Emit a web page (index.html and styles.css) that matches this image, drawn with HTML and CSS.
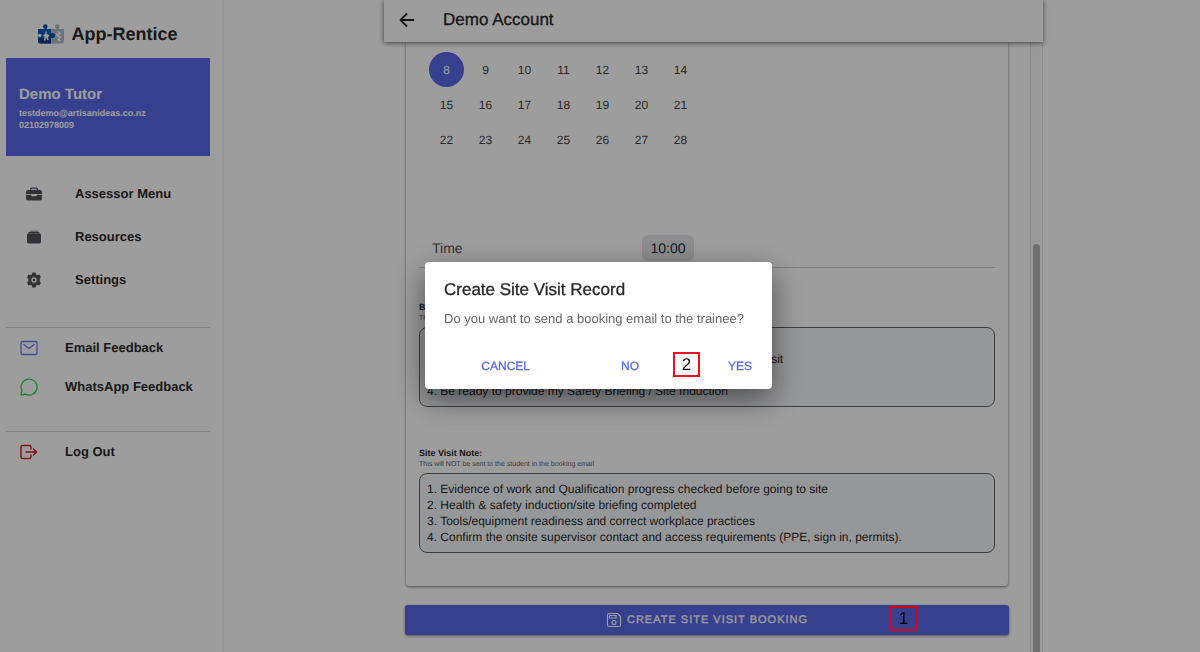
FILE: index.html
```html
<!DOCTYPE html>
<html lang="en">

<head>
    <meta charset="UTF-8">
    <title>App-Rentice</title>
    <link rel="stylesheet" href="styles.css">
</head>

<body>
    <div class="app">
        <aside class="sidebar">
            <div class="brand">
                <svg class="logo" viewBox="0 0 26 20">
                    <path fill="#0d5cb5" d="M0 5h6.500C5.500 4 5 3.500 5 2.500a2.300 2.300 0 0 1 4.600 0C9.600 3.500 9 4 8.500 5H13v14.500H3Q0 19.500 0 17z" />
                    <path fill="#123f86" d="M0 14h13v5.500H3Q0 19.500 0 17z" />
                    <path fill="#a9bccd" d="M13 5h5.500C17.500 4 17 3.500 17 2.500a2.300 2.300 0 0 1 4.600 0C21.600 3.500 21 4 20.500 5H26v12q0 2.500-2.500 2.500H13z" />
                    <circle cx="14.500" cy="11.500" r="2.500" fill="#0d4f9f" />
                    <circle cx="1.800" cy="11.500" r="1.700" fill="#fff" />
                    <path fill="none" stroke="#fff" stroke-width="1.500" stroke-linejoin="round" d="M8 7.500v3L5.500 12M8 10.500l3 1.500M8 10.500L6.500 16.500M8.500 11l1.500 5M7 13.500h2.500" />
                    <path fill="none" stroke="#fff" stroke-width="1.500" stroke-linejoin="round" d="M20 7.500l2 1.500-2.500 2.500 3 1.500-2.500 2.500 2.500 1.500M18.500 9.500l1 2" />
                </svg>
                <h1>App-Rentice</h1>
            </div>
            <div class="user">
                <h2>Demo Tutor</h2>
                <p>testdemo@artisanideas.co.nz</p>
                <p>02102978009</p>
            </div>
            <nav class="menu">
                <a href="#">
                    <svg viewBox="0 0 16 16" fill="#52525b">
                        <path d="M4 4V3q0-1.500 1.500-1.500h5Q12 1.500 12 3v1h2q2 0 2 2v2H0V6q0-2 2-2zM5.300 4h5.400V3.200q0-.4-.4-.4H5.700q-.4 0-.4.4z" />
                        <path d="M0 8.800h5q0 1.400 1.200 1.400h3.600q1.200 0 1.200-1.400h5V12.500q0 2-2 2H2q-2 0-2-2z" />
                    </svg>
                    Assessor Menu
                </a>
                <a href="#">
                    <svg viewBox="0 0 16 16" fill="#52525b">
                        <path d="M4.500 1.700h7q.8 0 .8.700H3.700q0-.7.8-.7zM3.500 2.900h9q1 0 1.200 1H2.300q.2-1 1.200-1z" />
                        <rect x="1" y="4.300" width="14" height="10.200" rx="1.700" />
                    </svg>
                    Resources
                </a>
                <a href="#">
                    <svg viewBox="0 0 24 24" fill="#52525b">
                        <path fill-rule="evenodd" d="M9.500.8h5l.8 3 1.700 1 3.200-.9 2.300 4-2 2.400v3.400l2 2.400-2.300 4-3.200-.9-1.700 1-.8 3h-5l-.8-3-1.700-1-3.200.9-2.300-4 2-2.400v-3.400l-2-2.400 2.300-4 3.200.9 1.700-1zM12 8a4 4 0 1 0 0 8 4 4 0 0 0 0-8z" />
                        <circle cx="12" cy="12" r="2" />
                    </svg>
                    Settings
                </a>
            </nav>
            <nav class="links">
                <a href="#">
                    <svg viewBox="0 0 18 18" fill="none" stroke="#6f7df0" stroke-width="1.300" stroke-linecap="round" stroke-linejoin="round">
                        <rect x="1" y="2.500" width="16" height="13" rx="1.500" />
                        <path d="M4 5.500l5 4 5-4" />
                    </svg>
                    Email Feedback
                </a>
                <a href="#">
                    <svg viewBox="0 0 18 18" fill="none" stroke="#2dd55b" stroke-width="1.300" stroke-linejoin="round">
                        <path d="M1.900 12.500A8 8 0 1 1 5.500 16.200L1 17z" />
                    </svg>
                    WhatsApp Feedback
                </a>
            </nav>
            <nav class="links">
                <a href="#">
                    <svg viewBox="0 0 18 18" fill="none" stroke="#d5101f" stroke-width="1.400" stroke-linecap="round" stroke-linejoin="round">
                        <path d="M11 6V4q0-1.500-1.500-1.500h-7Q1 2.500 1 4v10q0 1.500 1.500 1.500h7Q11 15.500 11 14v-2M6 9h10.500M13.500 6l3 3-3 3" />
                    </svg>
                    Log Out
                </a>
            </nav>
        </aside>

        <main class="main">
            <header class="topbar">
                <button class="back" aria-label="Back">
                    <svg viewBox="0 0 16 16" fill="none" stroke="#222" stroke-width="1.800" stroke-linecap="round" stroke-linejoin="round">
                        <path d="M14.500 8H2M7.500 2L1.500 8l6 6" />
                    </svg>
                </button>
                <h2>Demo Account</h2>
            </header>
            <div class="page">
                <div class="content">
                    <form class="card">
                        <div class="days">
                            <button type="button" class="active">8</button>
                            <button type="button">9</button>
                            <button type="button">10</button>
                            <button type="button">11</button>
                            <button type="button">12</button>
                            <button type="button">13</button>
                            <button type="button">14</button>
                            <button type="button">15</button>
                            <button type="button">16</button>
                            <button type="button">17</button>
                            <button type="button">18</button>
                            <button type="button">19</button>
                            <button type="button">20</button>
                            <button type="button">21</button>
                            <button type="button">22</button>
                            <button type="button">23</button>
                            <button type="button">24</button>
                            <button type="button">25</button>
                            <button type="button">26</button>
                            <button type="button">27</button>
                            <button type="button">28</button>
                        </div>
                        <div class="time">
                            <span id="timeLabel">Time</span>
                            <button type="button" aria-describedby="timeLabel">10:00</button>
                        </div>
                        <div class="field">
                            <label for="emailNote">Booking:</label>
                            <small>This will be sent</small>
                            <textarea id="emailNote" rows="4">1. Confirm the time
2. Have your evidence of work ready to show me on the day of visit
3. Bring your workbook
4. Be ready to provide my Safety Briefing / Site Induction</textarea>
                        </div>
                        <div class="field">
                            <label for="siteNote">Site Visit Note:</label>
                            <small>This will NOT be sent to the student in the booking email</small>
                            <textarea id="siteNote" rows="4">1. Evidence of work and Qualification progress checked before going to site
2. Health &amp; safety induction/site briefing completed
3. Tools/equipment readiness and correct workplace practices
4. Confirm the onsite supervisor contact and access requirements (PPE, sign in, permits).</textarea>
                        </div>
                    </form>
                    <div class="submit">
                        <button class="create">
                            <svg viewBox="0 0 16 16" fill="none" stroke="#fff" stroke-width="1.100" stroke-linejoin="round">
                                <path d="M3 1.500h8.500l3 3V13q0 1.500-1.500 1.500H3Q1.500 14.500 1.500 13V3Q1.500 1.500 3 1.500z" />
                                <path d="M3.500 6V3.500h6.500V6z" />
                                <circle cx="8" cy="10.500" r="2" />
                            </svg>
                            CREATE SITE VISIT BOOKING
                        </button>
                        <span class="step step-one">1</span>
                    </div>
                </div>
                <div class="scrollbar">
                    <div class="thumb"></div>
                </div>
            </div>
        </main>
    </div>

    <div class="backdrop">
        <div class="alert" role="dialog" aria-labelledby="alertTitle">
            <h2 id="alertTitle">Create Site Visit Record</h2>
            <p>Do you want to send a booking email to the trainee?</p>
            <div class="actions">
                <button class="cancel">CANCEL</button>
                <button class="no">NO</button>
                <span class="step">2</span>
                <button>YES</button>
            </div>
        </div>
    </div>
</body>

</html>
```

FILE: styles.css
```css
* {
    box-sizing: border-box;
}

body,
h1,
h2,
p,
button,
textarea {
    margin: 0;
    padding: 0;
}

body,
button,
textarea {
    font-family: "Liberation Sans", Arial, sans-serif;
    color: #2a2a2a;
    text-rendering: geometricPrecision;
}

a {
    color: #2a2a2a;
    text-decoration: none;
}

button {
    border: 0;
    background: none;
    cursor: pointer;
}

.app {
    display: flex;
    height: 100vh;
    overflow: hidden;
    background: #fff;
}

/* sidebar */
.sidebar {
    flex: 0 0 224px;
    padding: 0 12px 0 6px;
    border-right: 2px solid #f2f2f2;
}

.brand {
    display: flex;
    align-items: center;
    justify-content: center;
    gap: 7px;
    height: 58px;
    padding-top: 10px;
}

.brand h1 {
    font-size: 18px;
}

.logo {
    width: 26px;
    height: 20px;
}

.user {
    height: 98px;
    padding: 28px 13px;
    background: #5968e8;
}

.user h2,
.user p {
    color: #fff;
}

.user h2 {
    margin-bottom: 3px;
    font-size: 15px;
    line-height: 18px;
}

.user p {
    font-size: 9px;
    font-weight: bold;
    line-height: 12px;
}

.menu {
    padding: 16px 0 26px;
}

.menu a,
.links a {
    display: flex;
    align-items: center;
    font-size: 13px;
    font-weight: bold;
}

.menu a {
    gap: 33px;
    height: 43px;
    padding-left: 20px;
}

.menu svg {
    width: 16px;
    height: 16px;
}

.links {
    height: 104px;
    border-top: 1px solid #d4d4d4;
}

.links a {
    gap: 27px;
    height: 39px;
    padding-left: 14px;
}

.links svg {
    width: 18px;
    height: 18px;
}

/* page */
.main {
    flex: 1;
    display: flex;
    flex-direction: column;
    padding: 0 157px 0 160px;
}

.topbar {
    display: flex;
    align-items: center;
    gap: 28px;
    flex: 0 0 42px;
    padding: 0 15px 3px;
    background: #fff;
    box-shadow: 0 1px 5px rgba(0, 0, 0, .6);
    z-index: 1;
}

.topbar h2 {
    font-size: 17px;
    font-weight: normal;
    -webkit-text-stroke: 0.3px #222;
}

.back {
    width: 16px;
    height: 16px;
}

.back svg {
    display: block;
}

.page {
    flex: 1;
    display: flex;
}

.content {
    flex: 1;
    padding: 0 21px;
}

.card {
    height: 544px;
    margin: 0 1px;
    padding: 10px 13px 0;
    border-radius: 0 0 4px 4px;
    box-shadow: 0 1px 3px rgba(0, 0, 0, .5);
}

.days {
    display: grid;
    grid-template-columns: repeat(7, 39px);
    grid-auto-rows: 35px;
    justify-items: center;
    align-content: start;
    height: 176px;
    padding-left: 8px;
}

.days button {
    width: 35px;
    height: 35px;
    border-radius: 50%;
    color: #444;
    font-size: 12px;
}

.days .active {
    background: #5968e8;
    color: #fff;
}

.time {
    display: flex;
    align-items: center;
    height: 40px;
    padding-left: 13px;
    border-bottom: 1px solid #ccc;
}

.time span {
    width: 210px;
    color: #555;
    font-size: 14px;
}

.time button {
    width: 52px;
    height: 26px;
    border-radius: 6px;
    background: #e4e4e8;
    font-size: 14px;
}

.field {
    display: flex;
    flex-direction: column;
    height: 146px;
    padding-top: 33px;
}

.field label {
    font-size: 9px;
    font-weight: bold;
    line-height: 12px;
}

.field small {
    padding-bottom: 2px;
    color: #666;
    font-size: 7px;
    line-height: 12px;
}

.field textarea {
    height: 80px;
    padding: 7px;
    border: 1px solid #666;
    border-radius: 8px;
    background: #f4f5f8;
    font-size: 12px;
    line-height: 16px;
    resize: none;
    overflow: hidden;
}

.submit {
    position: relative;
    margin-top: 19px;
}

.create {
    display: flex;
    align-items: center;
    justify-content: center;
    gap: 5px;
    width: 100%;
    height: 30px;
    border-radius: 3px;
    background: #5968e8;
    box-shadow: 0 1px 3px rgba(0, 0, 0, .5);
    color: #fff;
    font-size: 11px;
    letter-spacing: 1px;
    -webkit-text-stroke: 0.3px #fff;
}

.create svg {
    width: 16px;
    height: 16px;
}

.step {
    display: flex;
    align-items: center;
    justify-content: center;
    width: 27px;
    height: 25px;
    border: 2px solid #f01020;
    color: #000;
    font-size: 17px;
}

/* sits above the backdrop */
.step-one {
    position: absolute;
    top: 1px;
    right: 92px;
    border-color: #d0061a;
    z-index: 3;
}

.scrollbar {
    flex: 0 0 13px;
    padding: 202px 2px 0;
    border: solid #e4e4e4;
    border-width: 0 1px;
    background: #fafafa;
}

.thumb {
    height: 100%;
    border-radius: 4px 4px 0 0;
    background: #b5b5b5;
}

/* dialog */
.backdrop {
    display: flex;
    align-items: center;
    justify-content: center;
    position: fixed;
    inset: 0;
    padding: 0 3px 1px 0;
    background: rgba(0, 0, 0, .385);
    z-index: 2;
}

.alert {
    width: 347px;
    padding: 18px 10px 10px 19px;
    border-radius: 4px;
    background: #fff;
    box-shadow: 0 10px 30px rgba(0, 0, 0, .5);
}

.alert h2 {
    font-size: 17px;
    font-weight: normal;
    line-height: 20px;
    -webkit-text-stroke: 0.3px #222;
}

.alert p {
    padding: 10px 0 22px;
    color: #666;
    font-size: 13px;
    line-height: 18px;
}

.actions {
    display: flex;
    align-items: center;
    justify-content: flex-end;
    gap: 18px;
}

.actions button {
    height: 29px;
    padding: 3px 10px 0;
    color: #5968e8;
    font-size: 12px;
    -webkit-text-stroke: 0.3px #5968e8;
}

.actions .no {
    margin-right: 6px;
}

.actions .cancel {
    margin-right: 53px;
}
```
